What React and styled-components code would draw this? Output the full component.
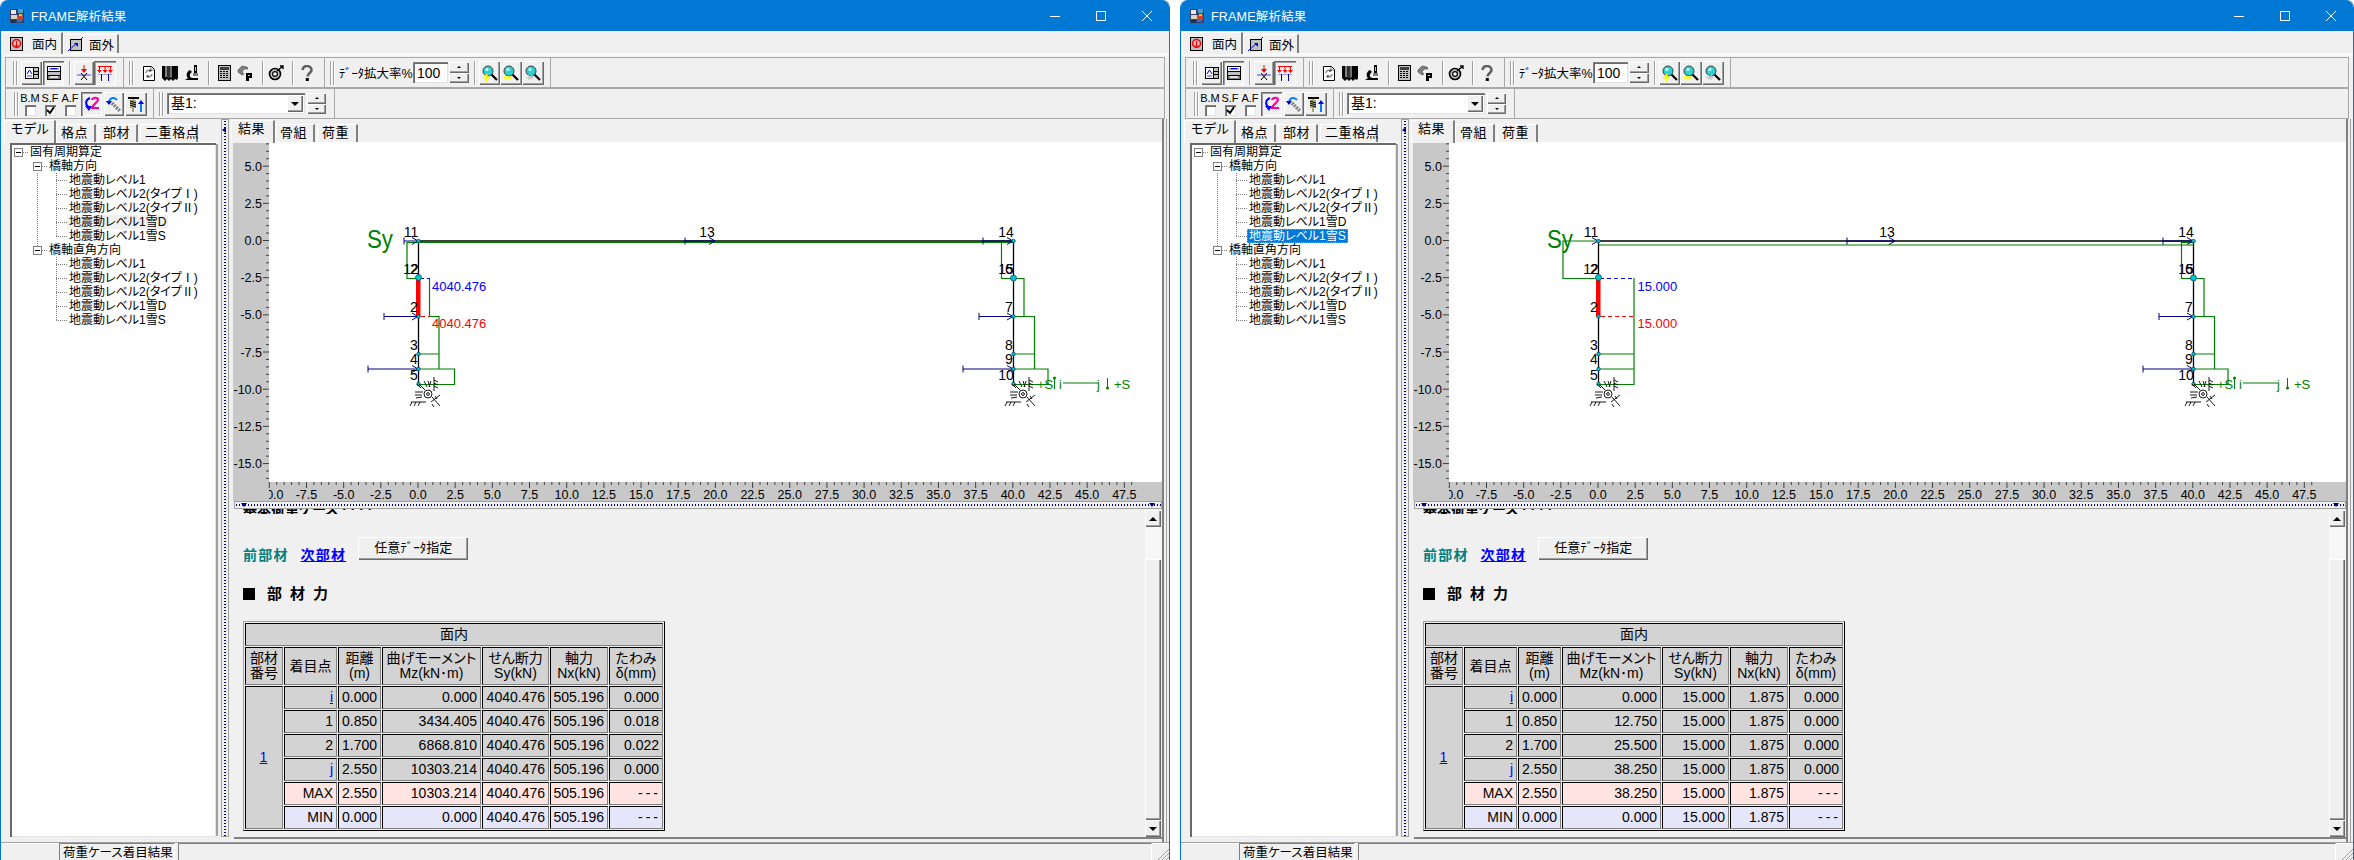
import React from 'react';
import styled, { createGlobalStyle, css } from 'styled-components';

const GlobalStyle = createGlobalStyle`
  html, body { margin: 0; padding: 0; background: #fff; }
  body {
    font-family: "Liberation Sans", "Noto Sans CJK JP", sans-serif;
    font-size: 13px;
    color: #000;
    font-feature-settings: "palt";
    overflow: hidden;
  }
`;

const raised = css`
  background: #f0f0f0;
  box-shadow: inset 1px 1px 0 #fff, inset -1px -1px 0 #696969, inset -2px -2px 0 #a0a0a0;
`;
const pressed = css`
  background: repeating-conic-gradient(#fff 0 25%, #e6e6e6 0 50%) 0 0 / 2px 2px;
  box-shadow: inset 1px 1px 0 #696969, inset 2px 2px 0 #a0a0a0, inset -1px -1px 0 #fff;
`;
const sunken = css`
  background: #fff;
  box-shadow: inset 1px 1px 0 #808080, inset 2px 2px 0 #696969, inset -1px -1px 0 #e3e3e3;
`;

const Desktop = styled.div`
  display: flex;
  gap: 10px;
  width: 2354px;
  height: 860px;
  overflow: hidden;
`;
const Window = styled.div`
  display: flex;
  flex-direction: column;
  flex: none;
  width: ${(p) => p.$width}px;
  height: 860px;
  box-sizing: border-box;
  border-left: 1px solid #0078d4;
  border-right: 1px solid #0078d4;
  background: #f0f0f0;
  border-radius: 8px 8px 0 0;
  overflow: hidden;
`;
const TitleBar = styled.div`
  display: flex;
  align-items: center;
  flex: none;
  height: 31px;
  margin: 0 -1px;
  padding-left: 9px;
  background: #0078d4;
  color: #fff;
  font-size: 12.5px;
`;
const TitleText = styled.span`
  margin-left: 6px;
  flex: 1;
  letter-spacing: 0.2px;
`;
const WinButton = styled.div`
  display: flex;
  align-items: center;
  justify-content: center;
  width: 46px;
  height: 31px;
`;
const PlaneTabs = styled.div`
  display: flex;
  align-items: flex-end;
  flex: none;
  height: 22px;
  padding-left: 1px;
  border-bottom: 1px solid #fff;
  box-shadow: 0 2px 0 #f7f7f7;
`;
const PlaneTab = styled.div`
  display: flex;
  align-items: center;
  gap: ${(p) => (p.$active ? 7 : 5)}px;
  box-sizing: border-box;
  height: ${(p) => (p.$active ? 22 : 19)}px;
  width: ${(p) => (p.$active ? 61 : 56)}px;
  padding-left: ${(p) => (p.$active ? 6 : 4)}px;
  font-size: 12.5px;
  white-space: nowrap;
  border-top: 1px solid #fff;
  border-left: 1px solid #fff;
  border-right: 2px solid #808080;
  ${(p) => p.$active && 'margin-bottom: -1px; background: #f0f0f0;'}
`;
const ToolRow = styled.div`
  display: flex;
  flex: none;
  height: 31px;
  box-sizing: border-box;
  margin: 0 4px;
  border: 1px solid #a9a9a9;
  ${(p) => p.$first && 'margin-top: 3px;'}
`;
const ToolBand = styled.div`
  display: flex;
  align-items: center;
  flex: none;
  width: ${(p) => p.$w}px;
  height: 100%;
  box-sizing: border-box;
  border-right: 1px solid #a9a9a9;
  padding-left: ${(p) => p.$pad || 5}px;
`;
const Gripper = styled.span`
  flex: none;
  width: 5px;
  height: 24px;
  margin-right: 3px;
  background: linear-gradient(90deg, #a0a0a0 0 1px, #fff 1px 2px, #f0f0f0 2px 3px, #a0a0a0 3px 4px, #fff 4px 5px);
`;
const ToolButton = styled.div`
  display: flex;
  align-items: center;
  justify-content: center;
  flex: none;
  width: ${(p) => p.$w || 21}px;
  height: 24px;
  margin-left: ${(p) => p.$ml || 0}px;
  margin-right: ${(p) => p.$mr || 0}px;
  ${(p) => (p.$state === 'pressed' ? pressed : p.$state === 'raised' ? raised : '')}
`;
const ToolDivider = styled.span`
  flex: none;
  width: 1px;
  height: 24px;
  background: #a0a0a0;
  box-shadow: 1px 0 0 #fff;
  margin: 0 ${(p) => p.$r ?? 5}px 0 ${(p) => p.$l ?? 5}px;
`;
const ToolLabel = styled.span`
  flex: none;
  width: 73px;
  font-size: 12.5px;
  margin-left: 1px;
  margin-right: 1px;
  white-space: nowrap;
`;
const ZoomInput = styled.div`
  ${sunken}
  flex: none;
  width: 35px;
  height: 21px;
  line-height: 22px;
  padding-left: 4px;
  box-sizing: border-box;
  font-size: 14px;
`;
const Spin = styled.div`
  display: flex;
  flex-direction: column;
  flex: none;
  width: ${(p) => p.$w || 20}px;
  height: 21px;
  margin-left: ${(p) => p.$ml ?? 1}px;
`;
const SpinPart = styled.div`
  ${raised}
  flex: 1;
  display: flex;
  align-items: center;
  justify-content: center;
  &::after {
    content: '';
    width: 0;
    height: 0;
    border-left: 2px solid transparent;
    border-right: 2px solid transparent;
    ${(p) => (p.$down ? 'border-top: 2px solid #000;' : 'border-bottom: 2px solid #000;')}
  }
`;
const CheckRow = styled.div`
  display: flex;
  flex: none;
  margin: 0 1px 0 -2px;
`;
const CheckGroup = styled.div`
  display: flex;
  flex-direction: column;
  align-items: center;
  width: 20px;
  font-size: 11px;
  line-height: 12px;
  white-space: nowrap;
`;
const CheckBox = styled.span`
  ${sunken}
  display: flex;
  align-items: center;
  justify-content: center;
  width: 11px;
  height: 11px;
  margin-top: 1px;
`;
const Combo = styled.div`
  ${sunken}
  display: flex;
  align-items: stretch;
  justify-content: space-between;
  flex: none;
  width: 138px;
  height: 21px;
  padding: 2px 2px 2px 4px;
  box-sizing: border-box;
  font-size: 14px;
  line-height: 17px;
`;
const ComboDrop = styled.div`
  ${raised}
  width: 16px;
  display: flex;
  align-items: center;
  justify-content: center;
  &::after {
    content: '';
    border-left: 4px solid transparent;
    border-right: 4px solid transparent;
    border-top: 4px solid #000;
  }
`;

const Workspace = styled.div`
  display: flex;
  flex: 1;
  min-height: 0;
`;
const LeftPane = styled.div`
  display: flex;
  flex-direction: column;
  flex: none;
  width: 217px;
  padding-left: 3px;
  box-sizing: border-box;
`;
const TabRow = styled.div`
  display: flex;
  align-items: flex-end;
  flex: none;
  height: 24px;
  border-bottom: 1px solid #fff;
  box-sizing: border-box;
`;
const PaneTab = styled.div`
  box-sizing: border-box;
  width: ${(p) => p.$w}px;
  height: ${(p) => (p.$active ? 23 : 18)}px;
  margin-right: ${(p) => (p.$active ? 0 : 2)}px;
  padding-left: 4px;
  font-size: 13px;
  line-height: 16px;
  letter-spacing: 0.6px;
  white-space: nowrap;
  border-top: 1px solid #fff;
  border-left: 1px solid #fff;
  border-right: 2px solid #808080;
  ${(p) => p.$active && 'margin-bottom: -1px; background: #f0f0f0; padding-left: 6px;'}
`;
const TreeFrame = styled.div`
  ${sunken}
  flex: 1;
  margin: 0 2px 5px 6px;
  padding-top: 2px;
  box-shadow: inset 2px 2px 0 #696969, inset -1px -1px 0 #e3e3e3, 3px 0 0 -1px #a0a0a0;
`;
const TreeRoot = styled.div`
  position: relative;
  &::before {
    content: '';
    position: absolute;
    left: 27px;
    top: 28px;
    height: 75px;
    border-left: 1px dotted #808080;
  }
`;
const TreeRow = styled.div`
  display: flex;
  align-items: center;
  height: 14px;
  padding-left: ${(p) => p.$indent}px;
  font-size: 12px;
  white-space: nowrap;
`;
const Toggle = styled.span`
  position: relative;
  flex: none;
  width: 9px;
  height: 9px;
  box-sizing: border-box;
  border: 1px solid #808080;
  background: #fff;
  &::after {
    content: '';
    position: absolute;
    left: 1px;
    right: 1px;
    top: 3px;
    height: 1px;
    background: #000;
  }
`;
const Connector = styled.span`
  flex: none;
  width: ${(p) => p.$w}px;
  border-top: 1px dotted #808080;
`;
const LeafGroup = styled.div`
  position: relative;
  &::before {
    content: '';
    position: absolute;
    left: 46px;
    top: 0;
    bottom: 7px;
    border-left: 1px dotted #808080;
  }
`;
const NodeLabel = styled.span`
  padding: 0 2px;
  line-height: 14px;
  ${(p) => p.$state === 'hover' && 'background: #f0f0f0;'}
  ${(p) =>
    p.$state === 'selected' &&
    'background: #0078d7; color: #fff; outline: 1px dotted #ff8c00; outline-offset: -1px;'}
`;

const VSplitter = styled.div`
  position: relative;
  flex: none;
  width: 8px;
  margin: 0 2px 5px 3px;
  border: 1px solid #a0a0a0;
  box-sizing: border-box;
  background: radial-gradient(circle, #000080 0.7px, transparent 1px) 0 0 / 6px 3px repeat-y;
  &::before {
    content: '';
    position: absolute;
    left: 0;
    top: 7px;
    border-top: 3px solid transparent;
    border-bottom: 3px solid transparent;
    border-right: 4px solid #000080;
  }
`;
const RightPane = styled.div`
  display: flex;
  flex-direction: column;
  flex: 1;
  min-width: 0;
  margin-right: 7px;
  box-shadow: 2px 0 0 #808080, 4px 0 0 #f0f0f0, 5px 0 0 #a0a0a0;
`;
const ChartFrame = styled.div`
  flex: none;
  height: 358px;
  margin-left: 2px;
  background: #fff;
  overflow: hidden;
`;
const ChartSvg = styled.svg`
  display: block;
  font-family: "Liberation Sans", sans-serif;
`;
const HSplitter = styled.div`
  position: relative;
  flex: none;
  height: 8px;
  margin-left: 3px;
  border: 1px solid #a0a0a0;
  box-sizing: border-box;
  background: radial-gradient(circle, #000080 0.7px, transparent 1px) 0 0 / 3px 6px repeat-x;
  &::before, &::after {
    content: '';
    position: absolute;
    top: 1px;
    border-left: 3px solid transparent;
    border-right: 3px solid transparent;
    border-top: 4px solid #000080;
  }
  &::before { left: 6px; }
  &::after { right: 6px; }
`;
const ReportFrame = styled.div`
  display: flex;
  flex: 1;
  min-height: 0;
  margin: 0 0 5px 3px;
  box-shadow: 0 2px 0 #808080;
  overflow: hidden;
`;
const Report = styled.div`
  flex: 1;
  padding-left: 9px;
  overflow: hidden;
`;
const ScrolledHeading = styled.div`
  height: 5px;
  overflow: hidden;
  font-size: 14px;
  font-weight: 700;
  line-height: 0;
  margin-bottom: 23px;
`;
const LinkRow = styled.div`
  display: flex;
  align-items: flex-start;
  height: 23px;
  font-size: 14px;
  font-weight: 700;
`;
const MemberLabel = styled.span`
  margin-top: 7px;
  color: ${(p) => p.$color};
  margin-right: ${(p) => p.$mr}px;
  letter-spacing: 1.2px;
  ${(p) => p.$link && 'text-decoration: underline;'}
`;
const SpecButton = styled.div`
  ${raised}
  width: 110px;
  height: 23px;
  line-height: 22px;
  text-align: center;
  font-weight: 400;
  font-size: 13px;
`;
const SectionTitle = styled.div`
  display: flex;
  align-items: center;
  height: 16px;
  margin: 26px 0 19px;
  font-size: 15px;
  line-height: 16px;
  font-weight: 700;
  letter-spacing: 8px;
  white-space: nowrap;
`;
const TitleMark = styled.span`
  flex: none;
  width: 12px;
  height: 12px;
  margin-right: 12px;
  background: #000;
`;
const ResultTable = styled.table`
  table-layout: fixed;
  width: 422px;
  border-spacing: 1px;
  border-collapse: separate;
  border: 1px solid;
  border-color: #a0a0a0 #000 #000 #a0a0a0;
  font-size: 14px;
`;
const Cell = styled.td`
  box-sizing: border-box;
  height: ${(p) => p.$h || 23}px;
  padding: 0 3px 0 2px;
  border: 1px solid;
  border-color: #000 #808080 #808080 #000;
  background: ${(p) => p.$bg || '#d3d3d3'};
  text-align: ${(p) => p.$align || 'right'};
  line-height: 15px;
  white-space: nowrap;
`;
const HeadCell = styled(Cell).attrs({ as: 'th' })`
  font-weight: 400;
  text-align: center;
  font-size: 14px;
  padding: 0;
`;
const NumLink = styled.span`
  color: #0000ff;
  text-decoration: underline;
`;
const NoValue = styled.span`
  letter-spacing: 3px;
  margin-right: -2px;
`;
const ScrollBar = styled.div`
  display: flex;
  flex-direction: column;
  flex: none;
  width: 16px;
  margin: 1px 1px 0 0;
`;
const ScrollButton = styled.div`
  ${raised}
  flex: none;
  height: 17px;
  display: flex;
  align-items: center;
  justify-content: center;
  &::after {
    content: '';
    border-left: 4px solid transparent;
    border-right: 4px solid transparent;
    ${(p) => (p.$down ? 'border-top: 4px solid #000;' : 'border-bottom: 4px solid #000;')}
  }
`;
const ScrollTrack = styled.div`
  flex: none;
  height: 32px;
  background: repeating-conic-gradient(#fff 0 25%, #f0f0f0 0 50%) 0 0 / 2px 2px;
`;
const ScrollThumb = styled.div`
  ${raised}
  flex: 1;
`;
const StatusBar = styled.div`
  display: flex;
  flex: none;
  height: 17px;
  padding-left: 58px;
  border-top: 1px solid #a0a0a0;
  box-shadow: inset 0 1px 0 #fff;
`;
const StatusPanel = styled.div`
  box-sizing: border-box;
  width: ${(p) => (p.$grow ? 'auto' : '116px')};
  flex: ${(p) => (p.$grow ? 1 : 'none')};
  margin-right: 3px;
  padding: 1px 0 0 3px;
  font-size: 12.5px;
  line-height: 16px;
  border-left: 1px solid #808080;
  border-top: 1px solid #808080;
  border-right: 1px solid #fff;
  white-space: nowrap;
`;
const Grip = styled.svg`
  flex: none;
  align-self: flex-end;
  display: block;
`;

const Px = styled.svg.attrs({ viewBox: '0 0 16 16', width: 16, height: 16 })`
  display: block;
  flex: none;
`;

const AppIcon = () => (
  <Px>
    <rect x="1" y="1" width="14" height="14" fill="#3a3f6b" />
    <rect x="2" y="2" width="5" height="4" fill="#e8e8e8" />
    <rect x="9" y="1" width="5" height="4" fill="#4aa0c8" />
    <rect x="2" y="7" width="6" height="4" fill="#d8d8c0" />
    <rect x="8" y="7" width="6" height="5" fill="#d04030" />
    <rect x="10" y="6" width="3" height="2" fill="#f0c020" />
    <rect x="2" y="12" width="5" height="3" fill="#203050" />
    <rect x="8" y="12" width="5" height="2" fill="#3070c0" />
  </Px>
);
const InPlaneIcon = () => (
  <Px>
    <rect x="1.5" y="1.5" width="12" height="13" fill="#c0c0c0" stroke="#000" />
    <circle cx="7.5" cy="7.5" r="4" fill="none" stroke="#ff0000" strokeWidth="1.5" />
    <path d="M7.5 5v6M5.5 9l2 2 2-2" fill="none" stroke="#ff0000" />
  </Px>
);
const OutPlaneIcon = () => (
  <Px>
    <rect x="2.5" y="3.5" width="11" height="11" fill="#c0c0c0" stroke="#000" />
    <path d="M0 15L9 7M15 1l-2 2" stroke="#0000ff" fill="none" />
    <path d="M6 7h4v4z" fill="#0000ff" />
  </Px>
);
const ViewModelIcon = () => (
  <Px>
    <rect x="1" y="2" width="14" height="12" fill="#000" />
    <rect x="2" y="3" width="7" height="10" fill="#fff" />
    <rect x="10" y="3" width="4" height="10" fill="#c0c0c0" />
    <path d="M3 9l2.5-4L8 9" stroke="#0000ff" fill="none" />
    <rect x="3" y="10" width="5" height="2" fill="#a0a0ff" />
    <rect x="10" y="6" width="4" height="1" /><rect x="10" y="9" width="4" height="1" />
  </Px>
);
const ViewForceIcon = () => (
  <Px>
    <rect x="1" y="1" width="14" height="14" fill="#000" />
    <rect x="2" y="2" width="12" height="4" fill="#fff" />
    <rect x="3" y="3" width="10" height="2" fill="#80a0ff" />
    <rect x="5" y="3" width="6" height="1" fill="#0000ff" />
    <rect x="2" y="7" width="12" height="3" fill="#c0c0c0" />
    <rect x="2" y="11" width="12" height="3" fill="#808080" />
    <rect x="4" y="11" width="8" height="2" fill="#e0e0e0" />
  </Px>
);
const LoadPointIcon = () => (
  <Px>
    <path d="M8 0v6" stroke="#ff0000" fill="none" />
    <path d="M5 4h6L8 8z" fill="#ff0000" />
    <rect x="1" y="9" width="14" height="2" fill="#a0a0f0" />
    <path d="M5 8l6 7M11 8l-6 7" stroke="#000" fill="none" />
  </Px>
);
const LoadDistIcon = () => (
  <Px>
    <path d="M1 1.5h14M2.5 1v5M8 1v5M13.5 1v5" stroke="#ff0000" fill="none" />
    <path d="M0 5h5L2.5 8zM5.5 5h5L8 8zM11 5h5l-2.5 3z" fill="#ff0000" />
    <path d="M1 9.5h14" stroke="#a0a0f0" fill="none" />
    <path d="M4.5 9v7M11.5 9v7" stroke="#0000c0" fill="none" />
  </Px>
);
const RefreshIcon = () => (
  <Px>
    <path d="M2.5 1.5h8l3 3v11h-11z" fill="#fff" stroke="#000" />
    <path d="M10 2v3h3" fill="none" stroke="#808080" />
    <path d="M5 8a3 3 0 0 1 5-2M11 9a3 3 0 0 1-5 2" fill="none" stroke="#808080" strokeWidth="1.4" />
    <path d="M9 4l2 2-3 1zM7 13l-2-2 3-1z" fill="#404040" />
  </Px>
);
const BooksIcon = () => (
  <Px>
    <rect x="0" y="1" width="5" height="12" fill="#000" />
    <rect x="5" y="1" width="5" height="12" fill="#303030" />
    <rect x="10" y="1" width="6" height="12" fill="#000" />
    <rect x="3" y="1" width="2" height="11" fill="#808080" />
    <rect x="8" y="1" width="2" height="11" fill="#707070" />
    <path d="M0 13h16l-1 2-2-1-2 2-2-2-2 2-2-2-2 2z" />
  </Px>
);
const MicroscopeIcon = () => (
  <Px>
    <path d="M10 0h3v8h-3z" />
    <path d="M11 2h1v4h-1z" fill="#c0c0c0" />
    <path d="M6 5C2 7 2 11 4 13L1 15h13v-2H8C5 12 5 9 8 7z" />
    <rect x="9" y="8" width="5" height="3" fill="#808080" />
  </Px>
);
const CalcIcon = () => (
  <Px>
    <rect x="2.5" y="0.5" width="12" height="15" fill="#c0c0c0" stroke="#000" />
    <rect x="4" y="2" width="9" height="3" fill="#404040" />
    {[6, 8, 10, 12].map((y) =>
      [4, 7, 10].map((x) => <rect key={`${x}-${y}`} x={x} y={y} width="2" height="1" fill="#000" />)
    )}
  </Px>
);
const PlugIcon = () => (
  <Px>
    <path d="M1 5l4-4 5 1 1 2-4 0-2 3 2 2-2 1-4-3z" fill="#808080" stroke="#404040" strokeWidth="0.6" />
    <path d="M9 8h6v5h-3v3H9z" />
    <rect x="11" y="10" width="2" height="1" fill="#c0c0c0" />
  </Px>
);
const TargetIcon = () => (
  <Px>
    <circle cx="7" cy="9" r="5.5" fill="#c0c0c0" stroke="#000" strokeWidth="1.6" />
    <circle cx="7" cy="9" r="2.4" fill="#fff" stroke="#000" strokeWidth="1.2" />
    <path d="M9 6l6-5M12 1h3v3" stroke="#000" fill="none" strokeWidth="1.4" />
  </Px>
);
const HelpIcon = () => (
  <Px>
    <path d="M3.5 5C4 2 6 1 8 1s4.5 1.5 4.5 4c0 3-4 3.5-4 6.5" fill="none" stroke="#606060" strokeWidth="2.6" />
    <rect x="6.8" y="13" width="3" height="3" />
  </Px>
);
const ZoomIcon = ({ mark }) => (
  <Px>
    <path d="M9 9l6 6" stroke="#000" strokeWidth="2.2" />
    <circle cx="6" cy="6" r="5" fill="#30d0d0" stroke="#404040" />
    <circle cx="5" cy="4.5" r="1.6" fill="#c0ffff" />
    {mark === 'plus' && <path d="M1 12.5h7M4.5 9v7" stroke="#ffff00" strokeWidth="2" />}
    {mark === 'minus' && <path d="M1 12.5h8" stroke="#ffff00" strokeWidth="2.4" />}
    {mark === 'fit' && <path d="M3 10l4 5M7 10l-4 5M1 12.5h8" stroke="#c8c8c0" strokeWidth="1.2" />}
  </Px>
);
const SwapIcon = () => (
  <Px>
    <path d="M6 2C1 4 1 9 5 11" fill="none" stroke="#0000ff" strokeWidth="2" />
    <path d="M1 10h7l-3 5z" fill="#0000ff" />
    <path d="M8 4c1-3 6-3 6 0 0 2-5 4-6 8h7" fill="none" stroke="#ff00a0" strokeWidth="2.2" />
  </Px>
);
const BendIcon = () => (
  <Px>
    <path d="M3 6C4 1 9 1 11 4" fill="none" stroke="#0080ff" strokeWidth="2" />
    <path d="M0 5h6L3 9z" fill="#0000c0" />
    <path d="M6 7l8 8" stroke="#808080" strokeWidth="3.5" strokeDasharray="2 1" />
  </Px>
);
const SpringIcon = () => (
  <Px>
    <rect x="0" y="1" width="11" height="2" />
    <path d="M5 3v1M2 5h6M2 7h6M2 9h6M2 11h6M5 12v4" stroke="#606000" fill="none" />
    <path d="M2 5l6 2M2 7l6 2M2 9l6 2" stroke="#000" fill="none" />
    <path d="M13 16V7" stroke="#0080ff" strokeWidth="2" />
    <path d="M10 8l3-4 3 4z" fill="#0000ff" />
  </Px>
);

const LineIcon = ({ children }) => (
  <svg width="12" height="12" viewBox="0 0 12 12" fill="none" stroke="#fff" strokeWidth="1">{children}</svg>
);

const scale = 14.87;
const ox = 417;
const oy = 240.5;
const px = (v) => ox + v * scale;
const py = (v) => oy - v * scale;
const range = (a, b, step) => {
  const out = [];
  for (let v = a; v <= b + 1e-6; v += step) out.push(Math.round(v * 10) / 10);
  return out;
};
const green = '#008000';
const navy = '#000080';

const Poly = ({ d, color = green, w = 1.2, dash }) => (
  <path d={d} fill="none" stroke={color} strokeWidth={w} strokeDasharray={dash} />
);
const LoadArrow = ({ x0, x1, y }) => (
  <g stroke={navy} fill="none" strokeWidth="1">
    <path d={`M${x0} ${y - 3.5}v7M${x0} ${y}H${x1}`} />
    <path d={`M${x1 - 6} ${y - 3.5}L${x1} ${y}L${x1 - 6} ${y + 3.5}`} />
  </g>
);
const NodeDot = ({ x, y, big }) => (
  <circle cx={x} cy={y} r={big ? 3 : 1.8} fill="#00c8c8" stroke="#004060" strokeWidth="0.7" />
);
const Support = ({ x, y }) => (
  <g transform={`translate(${x} ${y})`} stroke="#000" fill="none" strokeWidth="0.9">
    <path d="M-1 0l4 4M1 0l6 6M6-3l3 6M10-3l2 6M13-3l-2 6" />
    <path d="M16-7v14M16-4l4 2M16-1l4 2M16 2l4 2" />
    <circle cx="10" cy="10" r="4" />
    <circle cx="10" cy="10" r="1.4" />
    <path d="M-3 8h8M-3 11h7M-2 14l6-1" />
    <path d="M-7 18h15M-6 18l-2 4M-2 18l-2 4M2 18l-2 4" />
    <path d="M13 18l9-7M14 13l8 9M17 12l2 3M14 20l2 3" />
  </g>
);
const NodeNum = ({ x, y, children }) => (
  <text x={x} y={y} fontSize="14" fill="#000" textAnchor="middle">{children}</text>
);

const Chart = ({ width, mode }) => {
  const left = mode === 'first';
  return (
    <ChartSvg width={width} height="358" viewBox={`232 143 ${width} 358`}>
      <defs>
        <clipPath id={`clip-${mode}`}>
          <rect x="268" y="482" width={width} height="20" />
        </clipPath>
      </defs>
      <rect x="232" y="143" width="36" height="358" fill="#c8c8c8" />
      <rect x="232" y="482" width={width} height="19" fill="#c8c8c8" />
      {range(-16, 6.5, 0.5).map((v) => (
        <path key={v} d={`M${v % 2.5 === 0 ? 262 : 265} ${py(v)}H268`} stroke="#404040" />
      ))}
      {range(-15, 5, 2.5).map((v) => (
        <text key={v} x="261" y={py(v) + 4.5} fontSize="12.5" textAnchor="end">{v.toFixed(1)}</text>
      ))}
      {range(-10, 48, 0.5).map((v) => (
        <path key={v} d={`M${px(v)} 482V${v % 2.5 === 0 ? 488 : 485}`} stroke="#404040" />
      ))}
      <g clipPath={`url(#clip-${mode})`}>
        {range(-10, 47.5, 2.5).map((v) => (
          <text key={v} x={px(v)} y="499" fontSize="12.5" textAnchor="middle">{v.toFixed(1)}</text>
        ))}
      </g>

      <text x="366" y="248" fontSize="25" fill={green} textLength="26" lengthAdjust="spacingAndGlyphs">Sy</text>

      {left ? (
        <>
          <Poly d="M417 242.5H1012" />
          <Poly d="M417 242.5H406V278.5H417" />
          <Poly d="M428.5 278V316.5H438V369M417 354H438M417 369H453.5V384.5H417" />
          <Poly d="M419 278.5H429" color="#0000ff" w={1} dash="4 3" />
          <Poly d="M420 316.5H428" color="#ff0000" w={1} dash="4 3" />
        </>
      ) : (
        <>
          <Poly d="M417 245H1012" />
          <Poly d="M417 241H382V278.5H417" />
          <Poly d="M453 278V384.5H417M417 354H453M417 369H453" />
          <Poly d="M419 278.5H453" color="#0000ff" w={1} dash="4 3" />
          <Poly d="M420 316.5H453" color="#ff0000" w={1} dash="4 3" />
        </>
      )}
      <Poly d="M1012 242.5H1000.5V278.5H1023V316.5H1033.5V369M1012 316.5H1033.5M1012 354H1033.5M1012 369H1047V384.5H1012" />

      <path d="M417 241H1012M417.5 241V384M1012.5 241V384" stroke="#000" strokeWidth="1.3" fill="none" />
      <rect x="415" y="277" width="4.5" height="40" fill="#ff0000" />

      {left ? (
        <>
          <LoadArrow x0={403} x1={417} y={241} />
          <LoadArrow x0={383} x1={417} y={316.5} />
          <LoadArrow x0={367} x1={417} y={369} />
          <LoadArrow x0={684} x1={714} y={241} />
        </>
      ) : (
        <>
          <path d="M411 237.5L417 241L411 244.5" stroke={navy} fill="none" />
          <LoadArrow x0={666} x1={714} y={241} />
        </>
      )}
      <LoadArrow x0={982} x1={1012} y={241} />
      <LoadArrow x0={978} x1={1012} y={316.5} />
      <LoadArrow x0={962} x1={1012} y={369} />

      {[241, 354, 369, 384, 316.5].map((y) => <NodeDot key={y} x={417.5} y={y} />)}
      <NodeDot x={417.5} y={277.5} big />
      {[241, 316.5, 354, 369, 384].map((y) => <NodeDot key={y} x={1012.5} y={y} />)}
      <NodeDot x={1012.5} y={278} big />

      <Support x={417} y={384} />
      <Support x={1012} y={384} />

      <NodeNum x={410} y={237}>11</NodeNum>
      <NodeNum x={410} y={274}>12</NodeNum>
      <NodeNum x={413} y={274}>2</NodeNum>
      <NodeNum x={413} y={312}>2</NodeNum>
      <NodeNum x={413} y={350}>3</NodeNum>
      <NodeNum x={413} y={364}>4</NodeNum>
      <NodeNum x={413} y={380}>5</NodeNum>
      <NodeNum x={706} y={237}>13</NodeNum>
      <NodeNum x={1005} y={237}>14</NodeNum>
      <NodeNum x={1005} y={274}>15</NodeNum>
      <NodeNum x={1008} y={274}>6</NodeNum>
      <NodeNum x={1008} y={312}>7</NodeNum>
      <NodeNum x={1008} y={350}>8</NodeNum>
      <NodeNum x={1008} y={364}>9</NodeNum>
      <NodeNum x={1005} y={380}>10</NodeNum>

      <text x={left ? 431 : 456.5} y="291" fontSize="13" fill="#0000ff">{left ? '4040.476' : '15.000'}</text>
      <text x={left ? 431 : 456.5} y="328" fontSize="13" fill="#ff0000">{left ? '4040.476' : '15.000'}</text>

      <g fill={green} fontSize="13">
        <text x="1036" y="389">+S</text>
        <text x="1058" y="389">i</text>
        <text x="1096" y="389">j</text>
        <text x="1113" y="389">+S</text>
      </g>
      <path d="M1047 384.5H1034M1062 383H1097M1053.5 378V389M1106.5 378V388" stroke={green} fill="none" />
      <circle cx="1053.5" cy="378" r="1.5" fill={green} />
      <circle cx="1106.5" cy="388" r="1.5" fill={green} />
    </ChartSvg>
  );
};

const leaves = ['地震動レベル1', '地震動レベル2(タイプⅠ)', '地震動レベル2(タイプⅡ)', '地震動レベル1雪D', '地震動レベル1雪S'];
const branches = ['橋軸方向', '橋軸直角方向'];

const Tree = ({ active, state }) => (
  <TreeRoot>
    <TreeRow $indent={4}>
      <Toggle /><Connector $w={5} /><NodeLabel>固有周期算定</NodeLabel>
    </TreeRow>
    {branches.map((b, bi) => (
      <div key={b}>
        <TreeRow $indent={23}>
          <Toggle /><Connector $w={5} /><NodeLabel>{b}</NodeLabel>
        </TreeRow>
        <LeafGroup>
          {leaves.map((l, li) => (
            <TreeRow key={l} $indent={46}>
              <Connector $w={11} />
              <NodeLabel $state={bi === 0 && li === active ? state : undefined}>{l}</NodeLabel>
            </TreeRow>
          ))}
        </LeafGroup>
      </div>
    ))}
  </TreeRoot>
);

const Toolbars = () => (
  <>
    <ToolRow $first>
      <ToolBand $w={118} $pad={7}>
        <Gripper />
        <ToolButton $state="raised"><ViewModelIcon /></ToolButton>
        <ToolButton $state="pressed" $ml={1}><ViewForceIcon /></ToolButton>
        <ToolDivider $r={4} />
        <ToolButton $state="raised" $w={20}><LoadPointIcon /></ToolButton>
        <ToolButton $state="pressed" $w={22}><LoadDistIcon /></ToolButton>
      </ToolBand>
      <ToolBand $w={201} $pad={5}>
        <Gripper />
        <ToolButton $w={22} $ml={1}><RefreshIcon /></ToolButton>
        <ToolButton $w={20}><BooksIcon /></ToolButton>
        <ToolButton $w={23}><MicroscopeIcon /></ToolButton>
        <ToolDivider $r={4} />
        <ToolButton $w={22}><CalcIcon /></ToolButton>
        <ToolButton $w={20}><PlugIcon /></ToolButton>
        <ToolDivider $l={7} $r={2} />
        <ToolButton $w={22}><TargetIcon /></ToolButton>
        <ToolDivider $r={4} />
        <ToolButton $w={20}><HelpIcon /></ToolButton>
      </ToolBand>
      <ToolBand $w={226} $pad={5}>
        <Gripper />
        <ToolLabel>ﾃﾞｰﾀ拡大率%</ToolLabel>
        <ZoomInput>100</ZoomInput>
        <Spin><SpinPart /><SpinPart $down /></Spin>
        <ToolDivider $r={4} />
        <ToolButton $state="raised"><ZoomIcon mark="plus" /></ToolButton>
        <ToolButton $state="raised" $w={22}><ZoomIcon mark="minus" /></ToolButton>
        <ToolButton $state="raised" $w={22}><ZoomIcon mark="fit" /></ToolButton>
      </ToolBand>
    </ToolRow>
    <ToolRow>
      <ToolBand $w={148} $pad={8}>
        <Gripper />
        <CheckRow>
          <CheckGroup>B.M<CheckBox /></CheckGroup>
          <CheckGroup>
            S.F
            <CheckBox>
              <svg width="9" height="9" viewBox="0 0 9 9"><path d="M1 4l3 3 4-6" fill="none" stroke="#000" strokeWidth="2" /></svg>
            </CheckBox>
          </CheckGroup>
          <CheckGroup>A.F<CheckBox /></CheckGroup>
        </CheckRow>
        <ToolButton $state="pressed"><SwapIcon /></ToolButton>
        <ToolButton $state="raised" $w={20} $ml={2}><BendIcon /></ToolButton>
        <ToolButton $state="raised" $w={22} $ml={1}><SpringIcon /></ToolButton>
      </ToolBand>
      <ToolBand $w={181} $pad={5}>
        <Gripper />
        <Combo>基1:<ComboDrop /></Combo>
        <Spin $w={19} $ml={2}><SpinPart /><SpinPart $down /></Spin>
      </ToolBand>
    </ToolRow>
  </>
);

const headRows = [
  ['部材', '番号', 38],
  ['着目点', null, 53],
  ['距離', '(m)', 43],
  ['曲げモーメント', 'Mz(kN･m)', 99],
  ['せん断力', 'Sy(kN)', 67],
  ['軸力', 'Nx(kN)', 58],
  ['たわみ', 'δ(mm)', 54],
];

const ForceTable = ({ rows }) => (
  <ResultTable>
    <colgroup>
      {headRows.map((h) => <col key={h[0]} width={h[2]} />)}
    </colgroup>
    <tbody>
      <tr><HeadCell colSpan={7}>面内</HeadCell></tr>
      <tr>
        {headRows.map((h) => (
          <HeadCell key={h[0]} $h={38}>{h[0]}{h[1] && <br />}{h[1]}</HeadCell>
        ))}
      </tr>
      {rows.map((r, i) => (
        <tr key={r.label}>
          {i === 0 && <Cell rowSpan={6} $align="center"><NumLink>1</NumLink></Cell>}
          <Cell $bg={r.bg}>{r.link ? <NumLink>{r.label}</NumLink> : r.label}</Cell>
          {r.vals.map((v, vi) => (
            <Cell key={vi} $bg={r.bg}>{v === '---' ? <NoValue>{v}</NoValue> : v}</Cell>
          ))}
        </tr>
      ))}
    </tbody>
  </ResultTable>
);

const makeRows = (mz, sy, nx, def) => [
  { label: 'i', link: true, vals: ['0.000', mz[0], sy, nx, def[0]] },
  { label: '1', vals: ['0.850', mz[1], sy, nx, def[1]] },
  { label: '2', vals: ['1.700', mz[2], sy, nx, def[2]] },
  { label: 'j', link: true, vals: ['2.550', mz[3], sy, nx, def[3]] },
  { label: 'MAX', bg: '#ffe4e1', vals: ['2.550', mz[3], sy, nx, '---'] },
  { label: 'MIN', bg: '#e6e6fa', vals: ['0.000', mz[0], sy, nx, '---'] },
];

const windowsData = [
  {
    id: 'first',
    width: 1170,
    active: 3,
    state: 'hover',
    rows: makeRows(['0.000', '3434.405', '6868.810', '10303.214'], '4040.476', '505.196', ['0.000', '0.018', '0.022', '0.000']),
  },
  {
    id: 'second',
    width: 1174,
    active: 4,
    state: 'selected',
    rows: makeRows(['0.000', '12.750', '25.500', '38.250'], '15.000', '1.875', ['0.000', '0.000', '0.000', '0.000']),
  },
];

const FrameWindow = ({ data }) => (
  <Window $width={data.width}>
    <TitleBar>
      <AppIcon />
      <TitleText>FRAME解析結果</TitleText>
      <WinButton><LineIcon><path d="M1 6.5h10" /></LineIcon></WinButton>
      <WinButton><LineIcon><rect x="1.5" y="1.5" width="9" height="9" /></LineIcon></WinButton>
      <WinButton><LineIcon><path d="M1 1l10 10M11 1L1 11" /></LineIcon></WinButton>
    </TitleBar>
    <PlaneTabs>
      <PlaneTab $active><InPlaneIcon />面内</PlaneTab>
      <PlaneTab><OutPlaneIcon />面外</PlaneTab>
    </PlaneTabs>
    <Toolbars />
    <Workspace>
      <LeftPane>
        <TabRow>
          <PaneTab $active $w={52}>モデル</PaneTab>
          <PaneTab $w={40}>格点</PaneTab>
          <PaneTab $w={40}>部材</PaneTab>
          <PaneTab $w={58}>二重格点</PaneTab>
        </TabRow>
        <TreeFrame>
          <Tree active={data.active} state={data.state} />
        </TreeFrame>
      </LeftPane>
      <VSplitter />
      <RightPane>
        <TabRow>
          <PaneTab $active $w={44}>結果</PaneTab>
          <PaneTab $w={40}>骨組</PaneTab>
          <PaneTab $w={41}>荷重</PaneTab>
        </TabRow>
        <ChartFrame>
          <Chart width={data.width - 240} mode={data.id} />
        </ChartFrame>
        <HSplitter />
        <ReportFrame>
          <Report>
            <ScrolledHeading>基本荷重ケース · · · ·</ScrolledHeading>
            <LinkRow>
              <MemberLabel $color="#008080" $mr={12}>前部材</MemberLabel>
              <MemberLabel $color="#0000ff" $mr={12} $link>次部材</MemberLabel>
              <SpecButton>任意ﾃﾞｰﾀ指定</SpecButton>
            </LinkRow>
            <SectionTitle><TitleMark />部材力</SectionTitle>
            <ForceTable rows={data.rows} />
          </Report>
          <ScrollBar>
            <ScrollButton />
            <ScrollTrack />
            <ScrollThumb />
            <ScrollButton $down />
          </ScrollBar>
        </ReportFrame>
      </RightPane>
    </Workspace>
    <StatusBar>
      <StatusPanel>荷重ケース着目結果</StatusPanel>
      <StatusPanel $grow />
      <Grip width="14" height="14" viewBox="0 0 14 14">
        <path d="M3 14L14 3M7 14l7-7M11 14l3-3" stroke="#a0a0a0" fill="none" />
      </Grip>
    </StatusBar>
  </Window>
);

export default function App() {
  return (
    <>
      <GlobalStyle />
      <Desktop>
        {windowsData.map((w) => <FrameWindow key={w.id} data={w} />)}
      </Desktop>
    </>
  );
}
